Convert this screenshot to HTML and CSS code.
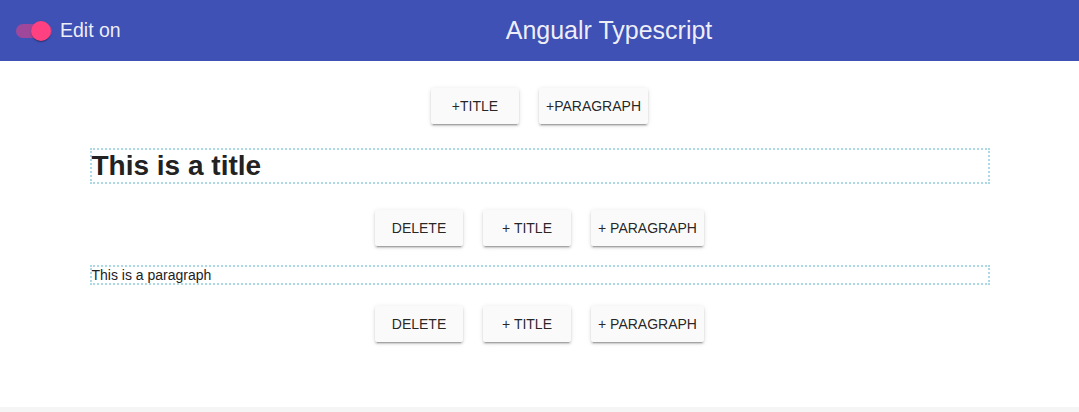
FILE: index.html
```html
<!DOCTYPE html>
<html>
<head>
<meta charset="utf-8">
<link rel="stylesheet" href="styles.css">
</head>
<body>
<div class="app">
  <header class="toolbar">
    <label class="toggle">
      <span class="toggle-bar"><span class="toggle-thumb"></span></span>
      <span class="toggle-label">Edit on</span>
    </label>
    <span class="toolbar-title">Angualr Typescript</span>
  </header>
  <main class="content">
    <div class="actions first">
      <button class="btn">+TITLE</button>
      <button class="btn">+PARAGRAPH</button>
    </div>
    <h1 class="block title-block">This is a title</h1>
    <div class="actions after-title">
      <button class="btn">DELETE</button>
      <button class="btn">+ TITLE</button>
      <button class="btn">+ PARAGRAPH</button>
    </div>
    <p class="block para-block">This is a paragraph</p>
    <div class="actions after-para">
      <button class="btn">DELETE</button>
      <button class="btn">+ TITLE</button>
      <button class="btn">+ PARAGRAPH</button>
    </div>
  </main>
</div>
</body>
</html>
```
FILE: styles.css
```css
html, body {
  margin: 0;
  padding: 0;
  background: #f5f5f5;
  font-family: "Liberation Sans", Arial, sans-serif;
  color: rgba(0, 0, 0, 0.87);
}

.app {
  height: 407px;
  background: #fff;
}

.toolbar {
  height: 61px;
  background: #3f51b5;
  color: rgba(255, 255, 255, 0.92);
  display: flex;
  align-items: center;
  padding: 0 16px;
  box-sizing: border-box;
}

.toggle {
  display: flex;
  align-items: center;
}

.toggle-bar {
  position: relative;
  width: 36px;
  height: 14px;
  border-radius: 7px;
  background: rgba(255, 64, 129, 0.5);
  display: block;
}

.toggle-thumb {
  position: absolute;
  left: 15px;
  top: -3px;
  width: 20px;
  height: 20px;
  border-radius: 50%;
  background: #ff4081;
  box-shadow: 0 2px 1px -1px rgba(0,0,0,.2), 0 1px 1px 0 rgba(0,0,0,.14), 0 1px 3px 0 rgba(0,0,0,.12);
}

.toggle-label {
  font-size: 19.5px;
  margin-left: 8px;
}

.toolbar-title {
  font-size: 25px;
  margin-left: 385px;
}

.content {
  width: 900px;
  margin: 0 auto;
  display: flex;
  flex-direction: column;
}

.actions {
  display: flex;
  justify-content: center;
  gap: 20px;
}

.actions.first { margin-top: 27px; }
.actions.after-title { margin-top: 26px; }
.actions.after-para { margin-top: 21px; }

.btn {
  min-width: 88px;
  height: 36px;
  padding: 0 7px;
  border: none;
  border-radius: 2px;
  background: #fafafa;
  font-family: "Liberation Sans", Arial, sans-serif;
  font-size: 14px;
  color: rgba(0, 0, 0, 0.87);
  box-shadow: 0 3px 1px -2px rgba(0,0,0,.2), 0 2px 2px 0 rgba(0,0,0,.14), 0 1px 5px 0 rgba(0,0,0,.12);
  cursor: pointer;
}

.block {
  margin: 0;
  border: 2px dotted #add8e6;
}

.title-block {
  margin-top: 24px;
  font-size: 28px;
  font-weight: bold;
  line-height: 32px;
  color: #222;
}

.para-block {
  margin-top: 19px;
  font-size: 14px;
  line-height: 16px;
  color: #222;
}
```
